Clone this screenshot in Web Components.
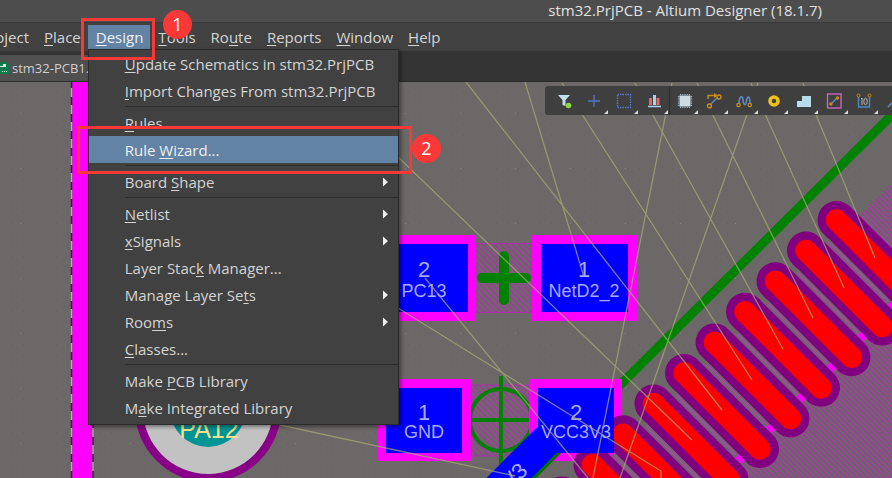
<!DOCTYPE html>
<html lang="en">
<head>
<meta charset="utf-8">
<title>stm32.PrjPCB - Altium Designer (18.1.7)</title>
<style>
  html, body { margin: 0; height: 100%; }
  body {
    background: #343434;
    color: #d4d4d4;
    font: 15px/20px "Open Sans", "Noto Sans", sans-serif;
    overflow: hidden;
  }
</style>
</head>
<body>
<app-window>
  <title-bar slot="title">stm32.PrjPCB - Altium Designer (18.1.7)</title-bar>
  <menu-bar slot="menu">
    <menu-item clipped>Pro<u>j</u>ect</menu-item>
    <menu-item><u>P</u>lace</menu-item>
    <menu-item open><u>D</u>esign
      <menu-popup slot="popup">
        <menu-row><u>U</u>pdate Schematics in stm32.PrjPCB</menu-row>
        <menu-row><u>I</u>mport Changes From stm32.PrjPCB</menu-row>
        <menu-line></menu-line>
        <menu-row><u>R</u>ules</menu-row>
        <menu-row active>Rule <u>W</u>izard...</menu-row>
        <menu-line></menu-line>
        <menu-row more>Board <u>S</u>hape</menu-row>
        <menu-line></menu-line>
        <menu-row more><u>N</u>etlist</menu-row>
        <menu-row more><u>x</u>Signals</menu-row>
        <menu-row>Layer Stac<u>k</u> Manager...</menu-row>
        <menu-row more>Manage Layer Se<u>t</u>s</menu-row>
        <menu-row more>Roo<u>m</u>s</menu-row>
        <menu-row><u>C</u>lasses...</menu-row>
        <menu-line></menu-line>
        <menu-row>Make <u>P</u>CB Library</menu-row>
        <menu-row>M<u>a</u>ke Integrated Library</menu-row>
      </menu-popup>
    </menu-item>
    <menu-item><u>T</u>ools</menu-item>
    <menu-item>Ro<u>u</u>te</menu-item>
    <menu-item><u>R</u>eports</menu-item>
    <menu-item><u>W</u>indow</menu-item>
    <menu-item><u>H</u>elp</menu-item>
  </menu-bar>
  <document-tabs slot="tabs">stm32-PCB1.</document-tabs>
  <pcb-canvas slot="canvas"><tool-strip></tool-strip></pcb-canvas>
  <call-out slot="notes" style="--x:81px;--y:18px;--w:74px;--h:42px;--bx:82px;--by:-8px">1</call-out>
  <call-out slot="notes" style="--x:77px;--y:126px;--w:335px;--h:48px;--bx:335px;--by:8px">2</call-out>
</app-window>

<script>
function element(name, html, setup) {
  const t = document.createElement('template');
  t.innerHTML = html;
  customElements.define(name, class extends HTMLElement {
    constructor() {
      super();
      this.attachShadow({ mode: 'open' }).append(t.content.cloneNode(true));
      if (setup) setup(this.shadowRoot, this);
    }
  });
}

element('app-window', `
<style>
  :host { display: flex; flex-direction: column; min-height: 100vh; position: relative; overflow: hidden; }
  main { flex: 1; display: flex; }
  .menu { position: relative; z-index: 2; }
</style>
<header><slot name="title"></slot></header>
<div class="menu"><slot name="menu"></slot></div>
<slot name="tabs"></slot>
<main><slot name="canvas"></slot></main>
<slot name="notes"></slot>`);

element('title-bar', `
<style>
  :host { display: flex; justify-content: flex-end; padding: 0 70px 2px 0; background: #4d4d4d; color: #e0e0e0; white-space: nowrap; }
</style>
<span><slot></slot></span>`);

element('menu-bar', `
<style>
  :host { display: block; background: #414141; border-top: 1px solid #3a3a3a; }
  nav { display: flex; height: 28px; align-items: stretch; }
</style>
<nav><slot></slot></nav>`);

element('menu-item', `
<style>
  :host { display: flex; position: relative; padding: 2px 0; }
  :host([clipped]) { width: 36px; justify-content: flex-end; overflow: hidden; }
  button { font: inherit; color: inherit; background: none; border: 0; margin: 0; padding: 0 7px 1px 8px; white-space: nowrap; }
  :host([open]) button { background: #6283a3; color: #f0f0f0; }
  ::slotted(u) { text-underline-offset: 2px; text-decoration-thickness: 1px; }
</style>
<button type="button"><slot></slot></button><slot name="popup"></slot>`);

element('menu-popup', `
<style>
  :host { display: block; box-sizing: border-box; position: absolute; left: 0; top: 26px; width: 311px; padding: 0 0 3px;
    background: #414141; color: #d4d4d4; border: 1px solid #2b2b2b; box-shadow: 2px 2px 4px #0006; z-index: 3; }
</style>
<div role="menu"><slot></slot></div>`);

element('menu-row', `
<style>
  :host { display: block; }
  button { display: flex; align-items: center; width: 100%; height: 27px; padding: 0 10px 0 36px; border: 0; margin: 0;
    background: none; color: inherit; font: inherit; white-space: nowrap; text-align: left; }
  span { flex: 1; }
  svg { display: none; width: 5px; height: 10px; fill: #f0f0f0; }
  :host([more]) svg { display: block; }
  :host([active]) button { background: #6283a3; color: #f0f0f0; }
  ::slotted(u) { text-underline-offset: 2px; text-decoration-thickness: 1px; }
</style>
<button type="button" role="menuitem"><span><slot></slot></span><svg viewBox="0 0 5 10"><path d="M0 0.5L5 5L0 9.500Z"/></svg></button>`);

element('menu-line', `
<style>
  :host { display: block; height: 1px; margin: 2px 0 2px 36px; background: #2c2c2c; }
</style>`);

element('document-tabs', `
<style>
  :host { display: flex; height: 26px; padding-top: 4px; background: #343434; border-bottom: 1px solid #2c2c2c; box-sizing: content-box; }
  button { display: flex; align-items: center; gap: 3px; margin: 0; padding: 0 60px 1px 0; border: 0; background: #505050; color: #cfcfcf;
    font: 13px/18px "Open Sans", "Noto Sans", sans-serif; }
  svg { width: 9px; height: 12px; }
</style>
<button type="button"><svg viewBox="0 0 9 12"><path fill="#0c7a4c" d="M0 0h6l3 3v9H0z"/><path fill="#d9efe4" d="M3 2h3v3H3zM2 9h1v1H2zM4 9h1v1H4zM6 9h1v1H6z"/><path stroke="#d9efe4" d="M0 4.500h3"/></svg><slot></slot></button>`);

element('call-out', `
<style>
  :host { position: absolute; left: var(--x); top: var(--y); width: var(--w); height: var(--h); box-sizing: border-box;
    border: 3px solid #fb3838; z-index: 5; pointer-events: none; }
  b { position: absolute; left: calc(var(--bx) - 3px); top: calc(var(--by) - 3px); width: 29px; height: 29px; border-radius: 50%;
    background: #fb3838; color: #fff; font: 18px/28px "Open Sans", "Noto Sans", sans-serif; text-align: center; }
</style>
<b><slot></slot></b>`);

const tools = [
  ['Selection filter', '<path fill="#bfe0ee" d="M2 2h12l-4.500 5v6l-3-1V7z"/><circle cx="12.500" cy="12.500" r="2.800" fill="#86dc3c"/>'],
  ['Move', '<path stroke="#5577c4" stroke-width="1.300" d="M8 2v12M2 8h12"/>'],
  ['Select area', '<rect x="1.500" y="1.500" width="13" height="13" fill="none" stroke="#5577d0" stroke-width="1.300" stroke-dasharray="1.500 1"/>'],
  ['Align', '<path fill="#dd6b63" d="M3 5h3v7H3zM10.500 5h3v7h-3z"/><path fill="#a9d2ee" d="M7 2h3v10H7z"/><path stroke="#a9d2ee" stroke-width="1.500" d="M2 13.500h13"/>'],
  ['Place component', '<path stroke="#90b4c8" stroke-width="1.200" stroke-dasharray="1.200 1" d="M3 1.500h11M3 14.500h11M1.500 3v11M14.500 3v11"/><rect x="2.500" y="2.500" width="11" height="11" fill="#cfdbe3"/>'],
  ['Route track', '<path fill="none" stroke="#c98a16" stroke-width="1.400" d="M2 6V2.500h7"/><path fill="#c98a16" d="M8 0l4 2.500L8 5z"/><path stroke="#5a88c0" stroke-width="1.600" d="M4 12l8-8"/><g fill="#414141" stroke="#d09018" stroke-width="1.300"><circle cx="3.500" cy="13" r="2"/><circle cx="13" cy="4" r="2"/></g>'],
  ['Tune length', '<path fill="none" stroke="#5a88c0" stroke-width="1.700" d="M3 11C3 3 6.500 1.500 7 7s3 6 3.500 1S14 2 14 10"/><g fill="none" stroke="#c98a16" stroke-width="1.300"><circle cx="2.500" cy="12" r="1.700"/><circle cx="13.800" cy="12" r="1.700"/></g>'],
  ['Place via', '<circle cx="8" cy="8" r="4" fill="#414141" stroke="#efc018" stroke-width="3.600"/>'],
  ['Place polygon', '<path fill="#b7dcea" d="M1 14V8h5V3h9v11z"/>'],
  ['Place line', '<rect x="1.500" y="1" width="13.500" height="14" fill="none" stroke="#c36ab8" stroke-width="1.400"/><path stroke="#5a88c0" stroke-width="1.600" d="M5 11l6-6"/><circle cx="4.800" cy="11" r="1.700" fill="#c98a16"/><circle cx="11.500" cy="5" r="1.700" fill="#c98a16"/>'],
  ['Place dimension', '<path fill="none" stroke="#4f86bd" stroke-width="1.500" d="M2.500 4v10h11V4"/><g fill="none" stroke="#c98a16"><circle cx="2.500" cy="2.500" r="1.500"/><circle cx="13.500" cy="2.500" r="1.500"/></g><path fill="none" stroke="#b8b8b8" d="M5 6l1-1v7"/><ellipse cx="9.500" cy="8.500" rx="1.700" ry="3.300" fill="none" stroke="#b8b8b8"/>'],
  ['Draw line', '<path stroke="#5a88c0" stroke-width="1.700" d="M2 14L13 3"/>']
];
element('tool-strip', `
<style>
  :host { position: absolute; left: 545px; right: 0; top: 4px; height: 29px; overflow: hidden; border-radius: 3px 0 0 3px; background: #3f3f3f; }
  div { display: flex; height: 100%; padding-left: 4px; }
  button { flex: none; position: relative; width: 30px; margin: 0; padding: 0; border: 0; background: none; display: grid; place-items: center; }
  svg { width: 16px; height: 16px; display: block; }
  button + button::after { content: ""; position: absolute; right: 1px; bottom: 1px; border: solid transparent; border-width: 0 0 4px 4px; border-bottom-color: #d8d8d8; }
  button:nth-child(5) { border-left: 1px solid #2c2c2c; }
</style><div role="toolbar"></div>`, root => {
  root.querySelector('div').innerHTML = tools.map(([label, art]) =>
    `<button type="button" aria-label="${label}"><svg viewBox="0 0 16 16">${art}</svg></button>`).join('');
});

element('pcb-canvas', `
<style>
  :host { flex: 1; display: block; position: relative; overflow: hidden; background: #6c6867; }
  svg { position: absolute; inset: 0; width: 100%; height: 100%; font-family: "Liberation Sans", Arial, sans-serif; }
</style>
<svg viewBox="0 82 892 396" preserveAspectRatio="xMinYMin slice" aria-label="Board layout">
  <defs>
    <pattern id="dots" width="11" height="11" patternUnits="userSpaceOnUse"><rect x="1" y="3" width="1" height="1" fill="#62605f"/></pattern>
    <pattern id="marks" width="55" height="55" patternUnits="userSpaceOnUse"><rect x="20" y="3" width="1" height="1" fill="#85827f"/></pattern>
    <clipPath id="pour"><path d="M892 183L597 478H892Z"/></clipPath>
    <clipPath id="gaps"><path d="M476 243H532V313H476ZM471 385H529V456H471Z"/></clipPath>
  </defs>
  <rect width="892" height="478" fill="url(#dots)"/>
  <rect width="892" height="478" fill="url(#marks)"/>
  <path d="M72 82h21v396h-21z" fill="#f0f"/>
  <path d="M71.500 82V478M93 82V478" stroke="#2e2a2e" stroke-width="1.500"/>
  <path d="M71.500 88V478M93 88V478" stroke="#b4aeb2" stroke-width="1.500" stroke-dasharray="9 8"/>
  <g clip-path="url(#pour)"><path id="pour-lines" stroke="#ae30ae" stroke-width="1.300"/></g>
  <g clip-path="url(#gaps)"><path id="gap-lines" stroke="#ae30ae" stroke-width="1.300"/></g>
  <path d="M476 243.500H532V312.500H476ZM471 385H529V456H471Z" fill="none" stroke="#b02cb0"/>
  <path d="M618 387L900 107" stroke="#008200" stroke-width="9"/>
  <path d="M482 278H526M504 256V300" stroke="#008200" stroke-width="10" stroke-linecap="round"/>
  <g fill="none" stroke="#008200" stroke-width="4"><path d="M501 376V464M471 420H529"/><circle cx="501" cy="420" r="31"/></g>
  <path fill="#f0f" d="M380 235H476V321H380ZM532 235H637V321H532ZM378 379H471V461H378ZM529 379H622V461H529Z"/>
  <g id="pads" stroke-linecap="round"></g>
  <path d="M563 427L500 490" stroke="#007000" stroke-width="34"/>
  <path d="M560 427L497 490" stroke="#00f" stroke-width="32"/>
  <path fill="#00f" d="M380 244H468V312H380ZM541 244H628V312H541ZM386 388H462V453H386ZM538 388H614V453H538Z"/>
  <circle cx="208" cy="409" r="73" fill="#808"/><circle cx="208" cy="409" r="65" fill="#c2c2c2"/><circle cx="208" cy="409" r="38" fill="#009494"/>
  <text x="209" y="438" font-size="25" fill="#f4e08c" text-anchor="middle">PA12</text>
  <g fill="#a9a9ff" text-anchor="middle" font-size="18">
    <text x="424" y="277" font-size="22">2</text><text x="424" y="297">PC13</text>
    <text x="584" y="277" font-size="22">1</text><text x="584" y="297">NetD2_2</text>
    <text x="424" y="420" font-size="22">1</text><text x="424" y="438">GND</text>
    <text x="576" y="420" font-size="22">2</text><text x="576" y="438">VCC3V3</text>
    <text transform="translate(529 472) rotate(-45)" text-anchor="end" font-size="22">VCC3V3</text>
  </g>
  <path fill="none" stroke="#a6a676" stroke-opacity=".75" stroke-width="1.300" d="M466 82L722 410M525 82L584 277M398 157L692 440M562 83L752 380M635 83L783 349M697 83L813 318M751 83L844 288M803 83L875 258M758 83L620 478M672 83L593 478M425 278L588 478M398 308L661 471V478M280 425L515 476"/>
</svg>
<slot></slot>`, root => {
  // Parallel 45-degree lines that fill a box; a clip path trims them to the shape.
  const hatch = (x0, x1, y, height, step) => {
    let d = '';
    for (let x = x0 - height; x < x1; x += step) d += `M${x} ${y}l${height} ${height}`;
    return d;
  };
  root.querySelector('#pour-lines').setAttribute('d', hatch(590, 892, 180, 300, 5.5));
  root.querySelector('#gap-lines').setAttribute('d', hatch(470, 533, 240, 220, 6));
  // A diagonal row of ten capsule pads, each one step down and to the left of the last.
  const ends = Array.from({ length: 10 }, (_, n) => [836.5 - 30.5 * n, 220 + 30.6 * n]);
  const line = (x, y, dx, dy, colour, w, cap = 'round') =>
    `<path d="M${x} ${y}l${dx} ${dy}" stroke="${colour}" stroke-width="${w}" stroke-linecap="${cap}"/>`;
  root.querySelector('#pads').innerHTML =
    ends.map(([x, y]) => line(x, y, 76, 76, '#800080', 38)).join('') +
    ends.map(([x, y]) => line(x - 10, y + 20, 66, 66, '#6c6867', 5, 'butt')
      + line(x - 8, y + 22, 60, 60, '#a050a0', 2, 'butt')
      + line(x + 53, y + 83, 6, 6, '#f0f', 5, 'butt')).join('') +
    ends.map(([x, y]) => line(x, y, 76, 76, '#f00', 21.5)).join('');
});
</script>
</body>
</html>
